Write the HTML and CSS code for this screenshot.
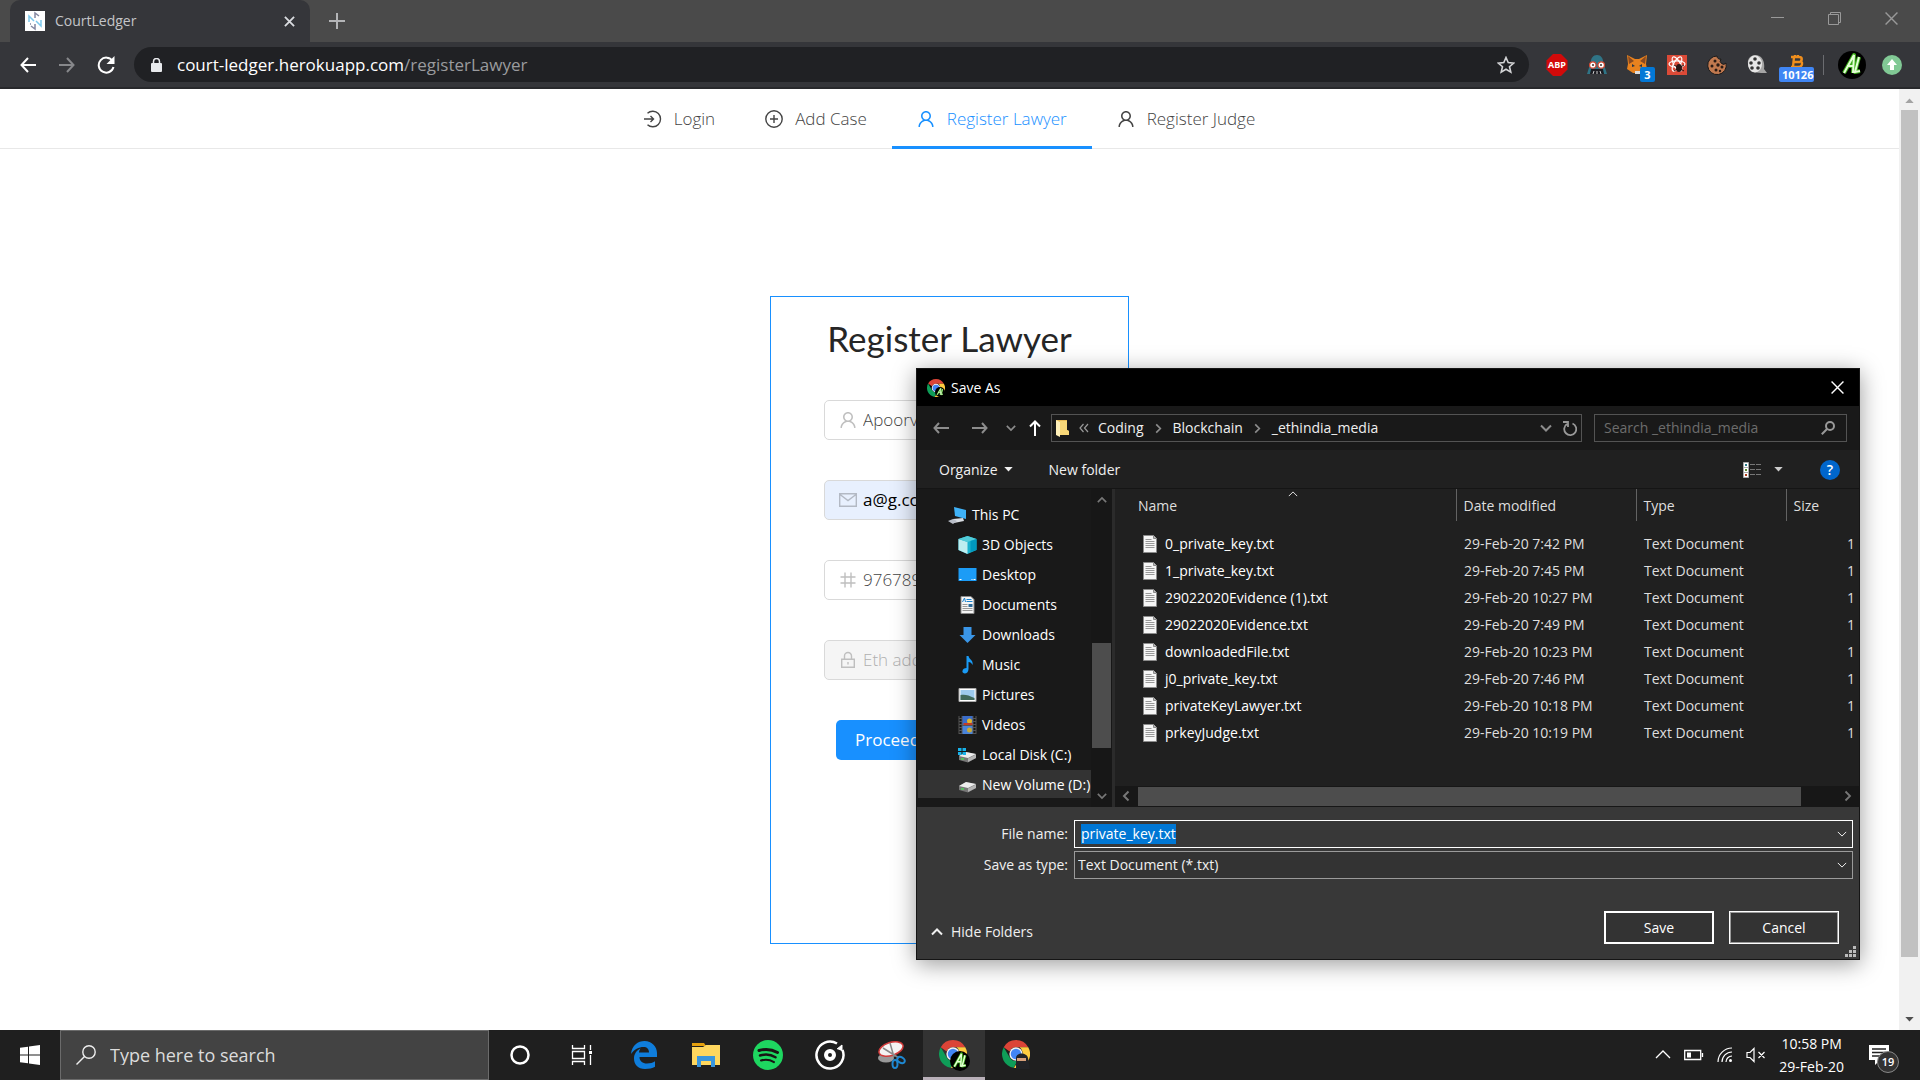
FILE: index.html
```html
<!DOCTYPE html>
<html lang="en">
<head>
<meta charset="utf-8">
<title>CourtLedger</title>
<link rel="stylesheet" href="styles.css">
</head>
<body>
<svg class="defs" aria-hidden="true">
  <defs>
    <symbol id="user" viewBox="64 64 896 896"><path fill="currentColor" d="M858.5 763.6a374 374 0 0 0-80.6-119.5 375.63 375.63 0 0 0-119.5-80.6c-.4-.2-.8-.3-1.2-.5C719.5 518 760 444.7 760 362c0-137-111-248-248-248S264 225 264 362c0 82.7 40.5 156 102.8 201.1-.4.2-.8.3-1.2.5-44.8 18.9-85 46-119.5 80.6a375.63 375.63 0 0 0-80.6 119.5A371.7 371.7 0 0 0 136 901.8a8 8 0 0 0 8 8.2h60c4.4 0 7.9-3.5 8-7.8 2-77.2 33-149.5 87.8-204.3 56.7-56.7 132-87.9 212.2-87.9s155.5 31.2 212.2 87.9C779 752.7 810 825 812 902.2c.1 4.4 3.6 7.8 8 7.8h60a8 8 0 0 0 8-8.2c-1-47.8-10.9-94.3-29.5-138.2zM512 534c-45.9 0-89.1-17.9-121.6-50.4S340 407.9 340 362c0-45.9 17.9-89.1 50.4-121.6S466.1 190 512 190s89.1 17.9 121.6 50.4S684 316.1 684 362c0 45.9-17.9 89.1-50.4 121.6S557.9 534 512 534z"/></symbol>
    <symbol id="chev-down" viewBox="0 0 12 12"><path d="M1 3.5l5 5 5-5" fill="none" stroke="currentColor" stroke-width="2"/></symbol>
    <symbol id="chev-up" viewBox="0 0 12 12"><path d="M1 8.500l5-5 5 5" fill="none" stroke="currentColor" stroke-width="2"/></symbol>
    <symbol id="chev-thin" viewBox="0 0 12 12"><path d="M1 3.500l5 5 5-5" fill="none" stroke="currentColor" stroke-width="1.200"/></symbol>
    <symbol id="chev-right" viewBox="0 0 12 12"><path d="M3.500 1.500l4.500 4.500-4.500 4.500" fill="none" stroke="currentColor" stroke-width="1.800"/></symbol>
    <symbol id="chev-left" viewBox="0 0 12 12"><path d="M8.500 1.500L4 6l4.500 4.500" fill="none" stroke="currentColor" stroke-width="2"/></symbol>
    <symbol id="tri" viewBox="0 0 10 6"><path d="M0 0h10L5 5.500z" fill="currentColor"/></symbol>
    <symbol id="arrow" viewBox="0 0 16 12"><path d="M6 1L1.500 6 6 11M1.500 6H16" fill="none" stroke="currentColor" stroke-width="2"/></symbol>
    <symbol id="cross" viewBox="0 0 12 12"><path d="M.5.5l11 11M11.500.5l-11 11" fill="none" stroke="currentColor" stroke-width="1.300"/></symbol>
    <symbol id="file" viewBox="0 0 14 18"><path d="M.5.5h10l3 3v14H.5z" fill="#f6f6f6" stroke="#8b8b8b"/><path d="M10.500.5v3h3" fill="#bbb" stroke="#8b8b8b"/><path d="M2.500 4.500h6M2.500 6.500h9M2.500 8.500h9M2.500 10.500h9M2.500 12.500h9" stroke="#999"/></symbol>
    <symbol id="chrome" viewBox="0 0 32 32"><path fill="#db4437" d="M16 0a16 16 0 0 1 14 8.300H16a8 8 0 0 0-7.300 4.800L2 8.200A16 16 0 0 1 16 0z"/><path fill="#0f9d58" d="M2 8.200l7 12a8 8 0 0 0 8.500 3.600l-4 8A16 16 0 0 1 2 8.200z"/><path fill="#ffcd40" d="M30 8.300A16 16 0 0 1 13.500 31.800l8.500-12a8 8 0 0 0-2-11.500z"/><circle cx="16" cy="16" r="7.600" fill="#f1f1f1"/><circle cx="16" cy="16" r="6" fill="#4285f4"/></symbol>
    <symbol id="monogram" viewBox="0 0 28 28"><circle cx="14" cy="14" r="14" fill="#000"/><path d="M6 22L16 4l-1 18M9 15h7M21 6l-4 15 5-1" fill="none" stroke="#3fae1c" stroke-width="4" stroke-linejoin="round"/><path d="M6 22L16 4l-1 18M9 15h7M21 6l-4 15 5-1" fill="none" stroke="#e4ffd6" stroke-width="2"/></symbol>
    <symbol id="drive" viewBox="0 0 19 12"><path d="M1 5l7-4 10 2v4l-8 4.500L1 9z" fill="#777"/><path d="M1 5l7-4 10 2-8 4z" fill="#ededed"/><path d="M10 7.500l8-4v3.500l-8 4z" fill="#b5b5b5"/><path d="M3 8h3" stroke="#4fd45a" stroke-width="1.500"/></symbol>
  </defs>
</svg>

<div class="tabstrip">
  <div class="tab">
    <svg class="favicon" viewBox="0 0 20 20"><path d="M0 0h20v20H0z" fill="#fff"/><path d="M10 7V2l4 3M10 13v5l-4-3M6 13h-1" fill="none" stroke="#8487a0" stroke-width="1.500"/><path d="M4 11V5l5 5M16 9v6l-5-5" fill="none" stroke="#7cc8ec" stroke-width="1.500"/></svg>
    <span class="tab-title">CourtLedger</span>
    <button class="ico" aria-label="Close tab"><svg width="11" height="11" viewBox="0 0 12 12"><path d="M1 1l10 10M11 1L1 11" stroke="#dadce0" stroke-width="2"/></svg></button>
  </div>
  <button class="ico newtab" aria-label="New tab"><svg width="16" height="16" viewBox="0 0 16 16"><path d="M8 0v16M0 8h16" stroke="#b4b5b7" stroke-width="2"/></svg></button>
  <div class="winctl">
    <button class="ico" aria-label="Minimize"><svg width="13" height="13" viewBox="0 0 13 13"><path d="M0 5.500h13" stroke="#999"/></svg></button>
    <button class="ico" aria-label="Restore"><svg width="13" height="13" viewBox="0 0 13 13"><path d="M.5 2.500h10v10H.5zM2.500 2.500v-2h10v10h-2" fill="none" stroke="#999"/></svg></button>
    <button class="ico" aria-label="Close"><svg width="13" height="13"><use href="#cross"/></svg></button>
  </div>
</div>

<div class="toolbar">
  <button class="ico" aria-label="Back"><svg width="16" height="16" viewBox="0 0 16 16"><path d="M8 1L1.500 8 8 15M1.500 8H16" fill="none" stroke="#fff" stroke-width="2"/></svg></button>
  <button class="ico" aria-label="Forward"><svg width="16" height="16" viewBox="0 0 16 16"><path d="M8 1l6.500 7L8 15M14.500 8H0" fill="none" stroke="#87888b" stroke-width="2"/></svg></button>
  <button class="ico" aria-label="Reload"><svg width="18" height="18" viewBox="0 0 18 18"><path d="M15.500 5A7.500 7.500 0 1 0 16.500 11" fill="none" stroke="#fff" stroke-width="2"/><path d="M17.500 0v8h-8z" fill="#fff"/></svg></button>
  <div class="omnibox">
    <svg width="11" height="14" viewBox="0 0 11 14"><rect y="5" width="11" height="9" rx="1" fill="#e8eaed"/><path d="M2.500 5V3.500a3 3 0 0 1 6 0V5" fill="none" stroke="#e8eaed" stroke-width="1.500"/></svg>
    <span class="url"><b>court-ledger.herokuapp.com</b>/registerLawyer</span>
    <svg width="18" height="18" viewBox="0 0 18 18"><path d="M9 1.500l2.200 5.100 5.500.5-4.200 3.600 1.300 5.400L9 13.200l-4.800 2.900 1.300-5.400L1.300 7.100l5.500-.5z" fill="none" stroke="#d3d4d6" stroke-width="1.600"/></svg>
  </div>
  <div class="exts">
    <span class="ext"><svg width="22" height="22" viewBox="0 0 22 22"><path d="M7 0h8l6.500 6.500v9L15 22H7L.5 15.500v-9z" fill="#d20a0a"/></svg><em class="abp">ABP</em></span>
    <span class="ext"><svg width="20" height="20" viewBox="0 0 20 20"><path d="M10 0c4 0 6 3 6.500 8L20 19H0L3.500 8C4 3 6 0 10 0z" fill="#2f7486"/><path d="M4 14h12l1 5H3z" fill="#1c1c22"/><circle cx="5.800" cy="10" r="3.200" fill="#fff" stroke="#d2452d" stroke-width="1.200"/><circle cx="14.200" cy="10" r="3.200" fill="#fff" stroke="#d2452d" stroke-width="1.200"/><circle cx="6" cy="10" r="1" fill="#333"/><circle cx="14" cy="10" r="1" fill="#333"/><path d="M6 19l1-3M10 19v-3M14 19l-1-3" stroke="#ccc"/></svg></span>
    <span class="ext"><svg width="20" height="20" viewBox="0 0 20 20"><path d="M0 0l8 4h4l8-4-1 9 1 5-6 4H6l-6-4 1-5z" fill="#e8821e"/><path d="M1 1l6 5-5 3zM19 1l-6 5 5 3z" fill="#8a4a20"/><path d="M5 9l3 2-3 1zM15 9l-3 2 3 1z" fill="#233447"/><path d="M8 16h5v3H8z" fill="#ddd"/></svg><i class="badge b3">3</i></span>
    <span class="ext"><svg width="20" height="20" viewBox="0 0 20 20"><rect width="20" height="20" fill="#db4a37"/><g fill="none" stroke="#fff" stroke-width="1.200"><ellipse cx="10" cy="9" rx="8" ry="3.200"/><ellipse cx="10" cy="9" rx="8" ry="3.200" transform="rotate(60 10 9)"/><ellipse cx="10" cy="9" rx="8" ry="3.200" transform="rotate(120 10 9)"/></g><ellipse cx="12" cy="13" rx="3" ry="4" fill="#2a1614"/><path d="M7 10l10 6M7 16l10-6" stroke="#2a1614"/></svg></span>
    <span class="ext"><svg width="20" height="20" viewBox="0 0 20 20"><path d="M10 1a3 3 0 0 0 4 3 3 3 0 0 0 5 4A9.300 9.300 0 1 1 10 1z" fill="#c1794f" stroke="#1a1a1a"/><g fill="#2a1a14"><circle cx="8" cy="6" r="1.500"/><circle cx="5" cy="11" r="1.500"/><circle cx="11" cy="10" r="1.700"/><circle cx="15" cy="12" r="1.500"/><circle cx="9" cy="15" r="1.500"/><circle cx="13" cy="16" r="1.200"/></g></svg></span>
    <span class="ext"><svg width="20" height="20" viewBox="0 0 20 20"><path d="M8 0c8 0 10 8 9 14l3 4h-6L5 17C0 13-2 1 8 0z" fill="#a5a5a5"/><ellipse cx="8" cy="9" rx="7" ry="8.500" fill="#e6e6e6"/><g fill="#333"><circle cx="8" cy="4" r="1.800"/><circle cx="4" cy="8" r="1.800"/><circle cx="12" cy="8" r="1.800"/><circle cx="5" cy="13" r="1.800"/><circle cx="11" cy="13" r="1.800"/></g></svg></span>
    <span class="ext"><svg width="20" height="20" viewBox="0 0 20 20"><path d="M4 2h8c4 0 3 4 1 4 3 1 3 6-2 6H4M7 2L6 12M6 7h7M8 0v3M11 0v3" fill="none" stroke="#ef8e1d" stroke-width="2.400"/></svg><i class="badge b6">10126</i></span>
  </div>
  <div class="profile">
    <svg width="28" height="28"><use href="#monogram"/></svg>
    <svg width="20" height="20" viewBox="0 0 20 20"><circle cx="10" cy="10" r="10" fill="#81c995"/><path d="M10 4l5 6h-3v5H8v-5H5z" fill="#fff"/></svg>
  </div>
</div>

<div class="viewport">
  <main class="page">
    <nav class="menu">
      <a href="#login"><svg width="18" height="18" viewBox="0 0 18 18"><path d="M3.500 3.200a7.800 7.800 0 1 1 0 11.600M0 9h9M6.500 6L9.500 9l-3 3" fill="none" stroke="currentColor" stroke-width="1.400"/></svg>Login</a>
      <a href="#case"><svg width="18" height="18" viewBox="0 0 18 18"><circle cx="9" cy="9" r="8.200" fill="none" stroke="currentColor" stroke-width="1.400"/><path d="M9 5v8M5 9h8" stroke="currentColor" stroke-width="1.400"/></svg>Add Case</a>
      <a href="#lawyer" class="on"><svg width="18" height="18"><use href="#user"/></svg>Register Lawyer</a>
      <a href="#judge"><svg width="18" height="18"><use href="#user"/></svg>Register Judge</a>
    </nav>
    <form class="card">
      <h1>Register Lawyer</h1>
      <label class="field"><svg width="18" height="18"><use href="#user"/></svg><input type="text" aria-label="Name" value="Apoorva"></label>
      <label class="field filled"><svg width="18" height="18" viewBox="0 0 18 18"><path d="M.7 2.700h16.600v12.600H.7zM1 3.500l8 6 8-6" fill="none" stroke="currentColor" stroke-width="1.400"/></svg><input type="email" aria-label="Email" value="a@g.com"></label>
      <label class="field"><svg width="18" height="18" viewBox="0 0 18 18"><path d="M6 1.500v15M12 1.500v15M1.500 6h15M1.500 12h15" stroke="currentColor" stroke-width="1.400"/></svg><input type="text" aria-label="Number" value="9767890"></label>
      <label class="field off"><svg width="18" height="18" viewBox="0 0 18 18"><path d="M2.700 8.200h12.600v8H2.700zM5.500 8V5a3.500 3.500 0 0 1 7 0v3M9 11v2.500" fill="none" stroke="currentColor" stroke-width="1.400"/></svg><input type="text" aria-label="Eth address" placeholder="Eth address" disabled></label>
      <button type="button" class="proceed">Proceed</button>
    </form>
  </main>
  <div class="vscroll">
    <svg width="9" height="5" class="up"><use href="#tri"/></svg>
    <div class="thumb"></div>
    <svg width="9" height="5"><use href="#tri"/></svg>
  </div>
</div>

<footer class="taskbar">
  <button class="ico start" aria-label="Start"><svg width="20" height="20" viewBox="0 0 20 20"><path d="M0 2.800L8 1.700v7.800H0zM9 1.500L20 0v9.500H9zM0 10.500h8v7.800l-8-1.100zM9 10.500h11V20L9 18.500z" fill="#fff"/></svg></button>
  <label class="tsearch"><svg width="20" height="20" viewBox="0 0 20 20"><circle cx="13" cy="7" r="6.200" fill="none" stroke="#eee" stroke-width="1.400"/><path d="M8.500 11.500L.5 19.500" stroke="#eee" stroke-width="1.400"/></svg><input type="text" placeholder="Type here to search" aria-label="Search"></label>
  <div class="apps">
    <button aria-label="Cortana"><svg width="20" height="20" viewBox="0 0 20 20"><circle cx="10" cy="10" r="8.500" fill="none" stroke="#fff" stroke-width="2.500"/></svg></button>
    <button aria-label="Task View"><svg width="22" height="20" viewBox="0 0 22 20"><path d="M1.500 0v3.500h12V0M1.500 20v-3.500h12V20M1.500 6.500h12v7h-12zM19.500 0v5M19.500 10v10" fill="none" stroke="#fff" stroke-width="1.300"/><path d="M18 6h3v3h-3z" fill="#fff"/></svg></button>
    <button aria-label="Edge"><svg width="26" height="28" viewBox="0 0 26 28"><path d="M0 13C1 4 7 0 13.500 0 21 0 26 6 26 12v4H8.500c0 4 3 6.500 7.500 6.500 3 0 6-1 8-2.300v5.500C21.500 27 18 28 14 28 7 28 3 23.500 3 17.500 3 13 5.500 9.500 9.500 7.500 8.500 9 8.200 10 8 11.500h10c0-3.500-2-5.500-5.500-5.500C8 6 3 8.500 0 13z" fill="#0f7ddb"/></svg></button>
    <button aria-label="File Explorer"><svg width="28" height="24" viewBox="0 0 28 24"><path d="M0 0h12l2 3H0z" fill="#e5a00d"/><path d="M0 4h11l3-2h14v20H0z" fill="#ffd75e"/><path d="M5 24V13h18v11h-4v-6H9v6z" fill="#3a96dd"/></svg></button>
    <button aria-label="Spotify"><svg width="30" height="30" viewBox="0 0 30 30"><circle cx="15" cy="15" r="15" fill="#1ed760"/><g fill="none" stroke="#191414" stroke-linecap="round"><path d="M6 10.500c6-1.800 13-1.200 18.500 2" stroke-width="3"/><path d="M7 15.500c5-1.500 11-1 15.500 1.800" stroke-width="2.500"/><path d="M8 20.500c4-1.200 9-.8 13 1.600" stroke-width="2"/></g></svg></button>
    <button aria-label="Groove Music"><svg width="30" height="30" viewBox="0 0 30 30"><path d="M22 3.500A13.500 13.500 0 1 0 27.500 10" fill="none" stroke="#fff" stroke-width="2.500"/><circle cx="15" cy="15" r="4" fill="none" stroke="#fff" stroke-width="4"/><path d="M22 9l5-4v6" fill="#fff" stroke="#fff"/></svg></button>
    <button aria-label="Snipping Tool"><svg width="28" height="28" viewBox="0 0 28 28"><ellipse cx="8" cy="17" rx="8" ry="4.500" fill="#999"/><ellipse cx="13" cy="8" rx="12.500" ry="6.500" transform="rotate(-18 13 8)" fill="#f4f4f4" stroke="#d23b3b" stroke-width="1.500"/><path d="M12 2l4 14M5 7l16 10" stroke="#888" stroke-width="1.500"/><ellipse cx="17" cy="23" rx="2.500" ry="4" fill="none" stroke="#1e88d2" stroke-width="2"/><ellipse cx="23" cy="19" rx="4" ry="2.800" transform="rotate(30 23 19)" fill="none" stroke="#1e88d2" stroke-width="2"/></svg></button>
    <button class="active" aria-label="Chrome"><svg width="31" height="31" viewBox="0 0 31 31"><use href="#chrome" width="28" height="28"/><use href="#monogram" x="11" y="11" width="20" height="20"/></svg></button>
    <button aria-label="Chrome"><svg width="28" height="30" viewBox="0 0 28 30"><use href="#chrome" width="28" height="28"/><path d="M14 29V18c0-6 11-6 12 0l2 11z" fill="#222327"/><path d="M15 18h9v3h-9z" fill="#d8a07a"/></svg></button>
  </div>
  <div class="tray">
    <svg width="16" height="16" viewBox="0 0 16 16"><path d="M1 11l7-7 7 7" fill="none" stroke="#fff" stroke-width="1.300"/></svg>
    <svg width="20" height="12" viewBox="0 0 20 12"><path d="M.7 1.500h16v9H.7zM18.500 4v4" fill="none" stroke="#fff" stroke-width="1.300"/><path d="M3 3.500h4v5H3z" fill="#fff"/></svg>
    <svg width="16" height="16" viewBox="0 0 16 16"><g fill="none" stroke="#fff" stroke-width="1.200"><path d="M1 15A14 14 0 0 1 15 1M5 15A10 10 0 0 1 15 5M9 15a6 6 0 0 1 6-6" /></g><circle cx="13.500" cy="13.500" r="1.500" fill="#fff"/></svg>
    <svg width="20" height="16" viewBox="0 0 20 16"><path d="M1 5.500h3l4-4v13l-4-4H1zM12.500 5l6 6M18.500 5l-6 6" fill="none" stroke="#fff" stroke-width="1.200"/></svg>
    <time>10:58 PM<br>29-Feb-20</time>
    <span class="note"><svg width="20" height="20" viewBox="0 0 20 20"><path d="M0 0h20v15h-9l-5 5v-5H0z" fill="#fff"/><path d="M3 4h14M3 7.500h14M3 11h10" stroke="#222" stroke-width="1.300"/></svg><i>19</i></span>
  </div>
</footer>

<section class="dialog" role="dialog" aria-label="Save As">
  <header class="dtitle">
    <svg width="18" height="18" viewBox="0 0 18 18"><use href="#chrome" width="18" height="18"/><use href="#monogram" x="8" y="8" width="10" height="10"/></svg>
    <span>Save As</span>
    <button class="ico" aria-label="Close"><svg width="13" height="13"><use href="#cross"/></svg></button>
  </header>
  <div class="dnav">
    <div class="arrows">
      <button class="ico" aria-label="Back"><svg width="16" height="12"><use href="#arrow"/></svg></button>
      <button class="ico" aria-label="Forward"><svg width="16" height="12" class="flip"><use href="#arrow"/></svg></button>
      <button class="ico" aria-label="Recent"><svg width="10" height="10"><use href="#chev-down"/></svg></button>
      <button class="ico lit" aria-label="Up"><svg width="12" height="16" viewBox="0 0 12 16"><path d="M1 6.500L6 1.500l5 5M6 1.500V16" fill="none" stroke="currentColor" stroke-width="2"/></svg></button>
    </div>
    <div class="address">
      <svg width="14" height="18" viewBox="0 0 14 18"><path d="M0 1h11v10l2 1v4H3z" fill="#e8bb55"/><path d="M0 1l4 2v15l-4-2z" fill="#fff0b8"/><path d="M4 2h7v9l2 1v4H4z" fill="#f8d778"/></svg>
      <svg width="10" height="10" viewBox="0 0 10 10"><path d="M4.500 1L1 5l3.500 4M9 1L5.500 5 9 9" fill="none" stroke="#999" stroke-width="1.200"/></svg>
      <a href="#c">Coding</a><svg width="11" height="11"><use href="#chev-right"/></svg>
      <a href="#b">Blockchain</a><svg width="11" height="11"><use href="#chev-right"/></svg>
      <a href="#e">_ethindia_media</a>
      <span class="addr-end"><svg width="12" height="12"><use href="#chev-down"/></svg><svg width="14" height="15" viewBox="0 0 14 15"><path d="M9.500 2.500a6 6 0 1 1-5.500.5M0 1h5v5" fill="none" stroke="#999" stroke-width="1.800"/></svg></span>
    </div>
    <label class="dsearch"><input type="text" placeholder="Search _ethindia_media" aria-label="Search"><svg width="14" height="14" viewBox="0 0 14 14"><circle cx="9" cy="5" r="4" fill="none" stroke="#999" stroke-width="2"/><path d="M6 8L.8 13.200" stroke="#999" stroke-width="2"/></svg></label>
  </div>
  <div class="dtools">
    <button>Organize <svg width="9" height="5"><use href="#tri"/></svg></button>
    <button>New folder</button>
    <span class="spacer"></span>
    <svg width="18" height="16" viewBox="0 0 18 16"><path d="M.5.5h5v15h-5zM.5 5.500h5M.5 10.500h5" fill="#fff" stroke="#aaa"/><path d="M2 2h2v2H2z" fill="#2b7a8a"/><path d="M2 7h2v2H2z" fill="#5c8a2b"/><path d="M2 12h2v2H2z" fill="#b03a1a"/><path d="M7 2.500h5M13 2.500h5M7 7.500h5M13 7.500h5M7 12.500h5M13 12.500h5" stroke="#777"/></svg>
    <svg width="9" height="5"><use href="#tri"/></svg>
    <button class="help" aria-label="Help">?</button>
  </div>
  <div class="dbody">
    <ul class="tree">
      <li class="root"><svg width="19" height="17" viewBox="0 0 19 17"><path d="M6 0l12 3v9L7 9z" fill="#3fb2f7"/><path d="M5 12l10-1 1 3-10 2z" fill="#d8dce2"/><path d="M0 14l5-2 4 2-4 3z" fill="#b9bec8"/></svg>This PC</li>
      <li><svg width="18" height="18" viewBox="0 0 18 18"><path d="M9 0l9 3v11l-9 4-9-4V3z" fill="#19b3cf"/><path d="M0 3l9 3v12l-9-4z" fill="#bdeef0"/><path d="M0 3l9-3 9 3-9 3z" fill="#52ccd8"/><path d="M12 5l6-2v11l-6 2z" fill="#0098bd"/></svg>3D Objects</li>
      <li><svg width="18" height="14" viewBox="0 0 18 14"><path d="M0 0h18v13H0z" fill="#1c9cf6"/><path d="M1 11.500h2M13 11.500h1M15 11.500h2" stroke="#fff"/></svg>Desktop</li>
      <li><svg width="18" height="18" viewBox="0 0 18 18"><path d="M2.500.5h10l3 3v14h-13z" fill="#f6f6f6" stroke="#8b8b8b"/><path d="M4 6l2-4 1 4M8 3.500h5M8 5.500h6" stroke="#1b84d0" fill="none"/><path d="M4 8.500h5M4 10.500h5M4 12.500h10M4 14.500h10" stroke="#999"/><path d="M10 8h4v3h-4z" fill="#2a6a9a"/></svg>Documents</li>
      <li><svg width="18" height="18" viewBox="0 0 18 18"><path d="M5 1h8v8h4l-8 8-8-8h4z" fill="#3a96e8"/></svg>Downloads</li>
      <li><svg width="18" height="18" viewBox="0 0 18 18"><path d="M8 0h2c1 4 5 4 4 9-1-2-2-3-4-3v7c0 6-7 5-6 2 0-2 2-3 4-3z" fill="#1a9bf5"/></svg>Music</li>
      <li><svg width="18" height="14" viewBox="0 0 18 14"><path d="M.5.5h17v13H.5z" fill="#fff" stroke="#aaa"/><path d="M2 2h14v10H2z" fill="#9dcbee"/><path d="M2 7c4-1 8 0 14 3v2H2z" fill="#416a5c"/></svg>Pictures</li>
      <li><svg width="18" height="18" viewBox="0 0 18 18"><path d="M0 0h18v18H0z" fill="#555"/><path d="M2 0v18M16 0v18" stroke="#161616" stroke-width="2" stroke-dasharray="2 1"/><path d="M4 0h10v9H4z" fill="#3a6cc8"/><path d="M4 10h10v8H4z" fill="#4a84da"/><circle cx="11" cy="5" r="2.500" fill="#e0b52c"/><path d="M5 7h9v2H5z" fill="#c23c26"/><circle cx="11" cy="14" r="2.500" fill="#c9a936"/></svg>Videos</li>
      <li><svg width="19" height="16" viewBox="0 0 19 16"><use href="#drive" y="4" width="19" height="12"/><path d="M0 1h3.500v3H0zM4.500 1H8v3H4.500zM0 5h3.500v3H0zM4.500 5H8v3H4.500z" fill="#17b2ea"/></svg>Local Disk (C:)</li>
      <li class="sel"><svg width="19" height="16" viewBox="0 0 19 16"><use href="#drive" y="4" width="19" height="12"/></svg>New Volume (D:)</li>
    </ul>
    <div class="tscroll"><svg width="10" height="10"><use href="#chev-up"/></svg><div class="tthumb"></div><svg width="10" height="10"><use href="#chev-down"/></svg></div>
    <div class="files">
      <table>
        <colgroup><col><col class="c-date"><col class="c-type"><col class="c-size"></colgroup>
        <thead><tr><th>Name<svg class="sort" width="10" height="10"><use href="#chev-thin"/></svg></th><th>Date modified</th><th>Type</th><th>Size</th></tr></thead>
        <tbody>
          <tr><td><svg width="14" height="18"><use href="#file"/></svg>0_private_key.txt</td><td>29-Feb-20 7:42 PM</td><td>Text Document</td><td>1</td></tr>
          <tr><td><svg width="14" height="18"><use href="#file"/></svg>1_private_key.txt</td><td>29-Feb-20 7:45 PM</td><td>Text Document</td><td>1</td></tr>
          <tr><td><svg width="14" height="18"><use href="#file"/></svg>29022020Evidence (1).txt</td><td>29-Feb-20 10:27 PM</td><td>Text Document</td><td>1</td></tr>
          <tr><td><svg width="14" height="18"><use href="#file"/></svg>29022020Evidence.txt</td><td>29-Feb-20 7:49 PM</td><td>Text Document</td><td>1</td></tr>
          <tr><td><svg width="14" height="18"><use href="#file"/></svg>downloadedFile.txt</td><td>29-Feb-20 10:23 PM</td><td>Text Document</td><td>1</td></tr>
          <tr><td><svg width="14" height="18"><use href="#file"/></svg>j0_private_key.txt</td><td>29-Feb-20 7:46 PM</td><td>Text Document</td><td>1</td></tr>
          <tr><td><svg width="14" height="18"><use href="#file"/></svg>privateKeyLawyer.txt</td><td>29-Feb-20 10:18 PM</td><td>Text Document</td><td>1</td></tr>
          <tr><td><svg width="14" height="18"><use href="#file"/></svg>prkeyJudge.txt</td><td>29-Feb-20 10:19 PM</td><td>Text Document</td><td>1</td></tr>
        </tbody>
      </table>
      <div class="hscroll"><svg width="12" height="12"><use href="#chev-left"/></svg><div class="hthumb"></div><svg width="12" height="12"><use href="#chev-right"/></svg></div>
    </div>
  </div>
  <div class="dform">
    <div class="row"><label for="fname">File name:</label><div class="box focus"><input id="fname" type="text" value="private_key.txt"><svg width="10" height="10"><use href="#chev-thin"/></svg></div></div>
    <div class="row"><label for="ftype">Save as type:</label><div class="box"><select id="ftype"><option>Text Document (*.txt)</option></select><svg width="10" height="10"><use href="#chev-thin"/></svg></div></div>
    <div class="dactions">
      <button class="hide"><svg width="12" height="12"><use href="#chev-up"/></svg>Hide Folders</button>
      <button class="btn save">Save</button>
      <button class="btn cancel">Cancel</button>
    </div>
    <svg class="grip" width="11" height="11" viewBox="0 0 11 11"><path d="M8 0h3v3H8zM4 4h3v3H4zM8 4h3v3H8zM0 8h3v3H0zM4 8h3v3H4zM8 8h3v3H8z" fill="#bbb"/></svg>
  </div>
</section>
<script src="main.js"></script>
</body>
</html>
```
FILE: styles.css
```css
* { box-sizing: border-box; }
body {
  margin: 0;
  height: 100vh;
  display: flex;
  flex-direction: column;
  overflow: hidden;
  position: relative;
  font: 14px/20px "Open Sans", sans-serif;
  background: #fff;
}
svg { display: block; flex: none; }
.defs { position: absolute; width: 0; height: 0; }
button, input, select { font: inherit; color: inherit; margin: 0; padding: 0; border: 0; background: none; outline: 0; min-width: 0; }
a { color: inherit; text-decoration: none; }
.ico { display: flex; align-items: center; justify-content: center; }

/* browser chrome */
.tabstrip { display: flex; height: 42px; background: #4a4a4a; padding-left: 10px; }
.tab { width: 300px; display: flex; align-items: center; background: #35363a; border-radius: 10px 10px 0 0; padding: 0 15px; color: #c4c5c8; }
.favicon { width: 20px; height: 20px; margin-right: 10px; }
.tab-title { flex: 1; }
.newtab { margin-left: 19px; }
.winctl { margin-left: auto; display: flex; align-items: flex-start; padding-top: 12px; color: #999; }
.winctl .ico { width: 57px; }
.toolbar { display: flex; align-items: center; height: 47px; background: #35363a; border-bottom: 2px solid #28292c; padding: 0 18px 0 17px; }
.toolbar > .ico { width: 22px; margin-right: 17px; }
.omnibox { flex: 1; height: 35px; display: flex; align-items: center; gap: 15px; background: #202124; border-radius: 18px; padding: 0 14px 0 17px; margin-right: 17px; }
.url { flex: 1; font-size: 17px; color: #9a9b9e; }
.url b { font-weight: 400; color: #fff; }
.exts { display: flex; align-items: center; gap: 18px; }
.ext { position: relative; width: 22px; height: 22px; display: flex; align-items: center; justify-content: center; }
.abp { position: absolute; inset: 0; font: 700 9px/22px "Open Sans", sans-serif; color: #fff; text-align: center; }
.badge { position: absolute; top: 13px; border-radius: 2px; color: #fff; font: 700 11px/15px "Open Sans", sans-serif; text-align: center; overflow: hidden; }
.b3 { left: 14px; width: 15px; background: #0378d6; }
.b6 { left: -7px; width: 35px; padding-left: 3px; background: #4086f4; text-align: left; }
.profile { display: flex; align-items: center; gap: 16px; border-left: 1px solid #6b6c70; margin-left: 15px; padding-left: 14px; height: 20px; }

/* web page */
.viewport { flex: 1; min-height: 0; display: flex; }
.page { flex: 1; overflow: hidden; }
.menu { display: flex; justify-content: center; height: 60px; border-bottom: 1px solid #e8e8e8; font-size: 17px; font-weight: 300; color: #444; }
.menu a { display: flex; align-items: center; gap: 12px; height: 60px; padding: 2px 25px 0; border-bottom: 3px solid transparent; }
.menu .on { color: #1890ff; border-color: #1890ff; }
.card { width: 359px; height: 648px; margin: 147px auto 0; border: 1px solid #1890ff; padding: 17px 53px; }
.card h1 { margin: 0 0 38px; font: 400 35px/48px Lato, sans-serif; color: #262626; text-align: center; white-space: nowrap; }
.field { display: flex; align-items: center; gap: 6px; height: 40px; margin-bottom: 40px; padding: 0 14px; border: 1px solid #d9d9d9; border-radius: 5px; color: #bfbfbf; }
.field input { flex: 1; width: 100%; font-size: 17px; font-weight: 300; color: #444; }
.filled { background: #e8f0fe; color: #b3b9c4; }
.filled input { color: #000; font-weight: 400; }
.off { background: #f5f5f5; }
.off input::placeholder { color: #b0b0b0; }
.proceed { margin-left: 12px; height: 40px; padding: 0 19px; border-radius: 5px; background: #1890ff; color: #fff; font-size: 17px; }
.vscroll { width: 21px; display: flex; flex-direction: column; align-items: center; background: #f1f1f1; color: #505050; padding: 9px 0 8px; }
.vscroll .up { transform: rotate(180deg); color: #a3a3a3; }
.thumb { width: 17px; flex: 1; margin: 7px 0 60px; background: #c1c1c1; }

/* taskbar */
.taskbar { display: flex; height: 50px; background: #1f1f1f; color: #fff; }
.start { width: 60px; }
.tsearch { width: 429px; display: flex; align-items: center; gap: 14px; padding: 0 15px; background: #434343; border: 1px solid #6b6b6b; }
.tsearch input { flex: 1; font-size: 18px; }
.tsearch input::placeholder { color: #dcdcdc; }
.apps { display: flex; }
.apps button { width: 62px; display: flex; align-items: center; justify-content: center; border-bottom: 3px solid transparent; border-top: 3px solid transparent; }
.apps .active { background: #333; border-bottom-color: #b9b0b9; border-top-color: #333; }
.tray { margin-left: auto; display: flex; align-items: center; gap: 13px; padding-right: 19px; }
.tray time { text-align: center; line-height: 23px; }
.note { position: relative; margin-left: 12px; padding-right: 12px; }
.note i { position: absolute; left: 8px; top: 6px; width: 22px; height: 22px; border-radius: 50%; background: #333; border: 1px solid #888; font: 600 11px/20px "Open Sans", sans-serif; text-align: center; }

/* save dialog */
.dialog { position: absolute; left: 916px; top: 368px; width: 944px; border: 1px solid #151515; color: #fff; background: #191919; box-shadow: 0 4px 22px rgba(0,0,0,.4); }
.dtitle { display: flex; align-items: center; gap: 6px; height: 37px; padding: 0 15px 0 10px; background: #000; }
.dtitle .ico { margin-left: auto; }
.dnav { display: flex; align-items: center; height: 44px; padding: 0 12px 0 16px; color: #8c8c8c; }
.arrows { display: grid; grid-template-columns: 39px 34px 23px 22px; }
.arrows .ico { justify-content: flex-start; }
.flip { transform: scaleX(-1); }
.lit { color: #fff; }
.address { flex: 1; display: flex; align-items: center; gap: 9px; height: 28px; padding: 0 4px; border: 1px solid #535353; }
.address a { color: #f0f0f0; }
.addr-end { margin-left: auto; display: flex; gap: 11px; align-items: center; }
.dsearch { display: flex; align-items: center; width: 253px; height: 28px; margin-left: 12px; padding: 0 11px 0 9px; border: 1px solid #535353; }
.dsearch input { flex: 1; }
.dsearch input::placeholder { color: #6d6d6d; }
.dtools { display: flex; align-items: center; height: 38px; padding: 1px 19px 0 22px; background: #202020; color: #f0f0f0; }
.dtools > button { display: flex; align-items: center; gap: 6px; margin-right: 36px; }
.dtools > svg { margin-right: 13px; color: #ccc; }
.spacer { flex: 1; }
.dtools .help { width: 20px; height: 20px; margin: 0 0 0 24px; justify-content: center; border-radius: 50%; background: #0066cc; color: #fff; font-weight: 600; }
.dbody { display: flex; height: 319px; border-top: 1px solid #151515; }
.tree { width: 174px; margin: 0; padding: 11px 0 0 1px; list-style: none; overflow: hidden; white-space: nowrap; }
.tree li { display: flex; align-items: center; gap: 5px; height: 28px; margin-bottom: 2px; padding: 2px 0 0 40px; }
.tree li > svg { width: 19px; }
.tree .root { padding-left: 30px; }
.tree .sel { background: #333; }
.tscroll { width: 21px; display: flex; flex-direction: column; align-items: center; background: #171717; color: #777; padding: 6px 0; }
.tthumb { width: 19px; height: 105px; margin: auto 0 43px; background: #4d4d4d; }
.files { flex: 1; display: flex; flex-direction: column; justify-content: space-between; background: #202020; border-left: 3px solid #2b2b2b; }
table { width: 100%; table-layout: fixed; border-collapse: collapse; }
.c-date { width: 180px; }
.c-type { width: 150px; }
.c-size { width: 73px; }
th { height: 32px; padding: 1px 0 0 7px; text-align: left; font-weight: 400; color: #dedede; border-left: 1px solid #636363; }
th:first-child { border: 0; padding-left: 23px; position: relative; }
.sort { position: absolute; left: 173px; top: 0; transform: rotate(180deg); }
thead::after { content: ""; display: block; height: 9px; }
td { height: 27px; padding: 0 0 0 8px; color: #dedede; }
td:first-child { display: flex; align-items: center; gap: 8px; padding-left: 28px; color: #fff; }
td:last-child { text-align: right; padding-right: 4px; }
.hscroll { display: flex; align-items: center; gap: 6px; height: 21px; padding: 0 5px 1px; background: #171717; color: #777; }
.hthumb { height: 19px; width: 663px; margin-right: auto; background: #4d4d4d; }
.dform { position: relative; background: #383838; padding: 13px 6px 15px 0; color: #f0f0f0; }
.row { display: flex; align-items: center; margin-bottom: 3px; }
.row label { width: 157px; padding-right: 6px; text-align: right; }
.box { flex: 1; display: flex; align-items: center; height: 28px; padding: 0 5px 0 3px; background: #333; border: 1px solid #9b9b9b; }
.box.focus { border-color: #fff; background: #383838; padding-left: 6px; }
.box input, .box select { flex: 1; appearance: none; }
.box input { height: 20px; line-height: 20px; }
.box input::selection { background: rgba(0,120,215,.99); color: #fff; }
.dactions { display: flex; align-items: center; margin-top: 32px; padding-right: 14px; }
.hide { display: flex; align-items: center; gap: 8px; margin: 8px auto 0 14px; }
.btn { width: 110px; height: 33px; margin-left: 15px; background: #333; color: #fff; border: 2px solid #fff; }
.cancel { border: 1px solid #fff; box-shadow: inset 0 0 0 1px #9b9b9b; }
.grip { position: absolute; right: 3px; bottom: 2px; }
```
FILE: main.js
```js
document.getElementById("fname").select();
```
